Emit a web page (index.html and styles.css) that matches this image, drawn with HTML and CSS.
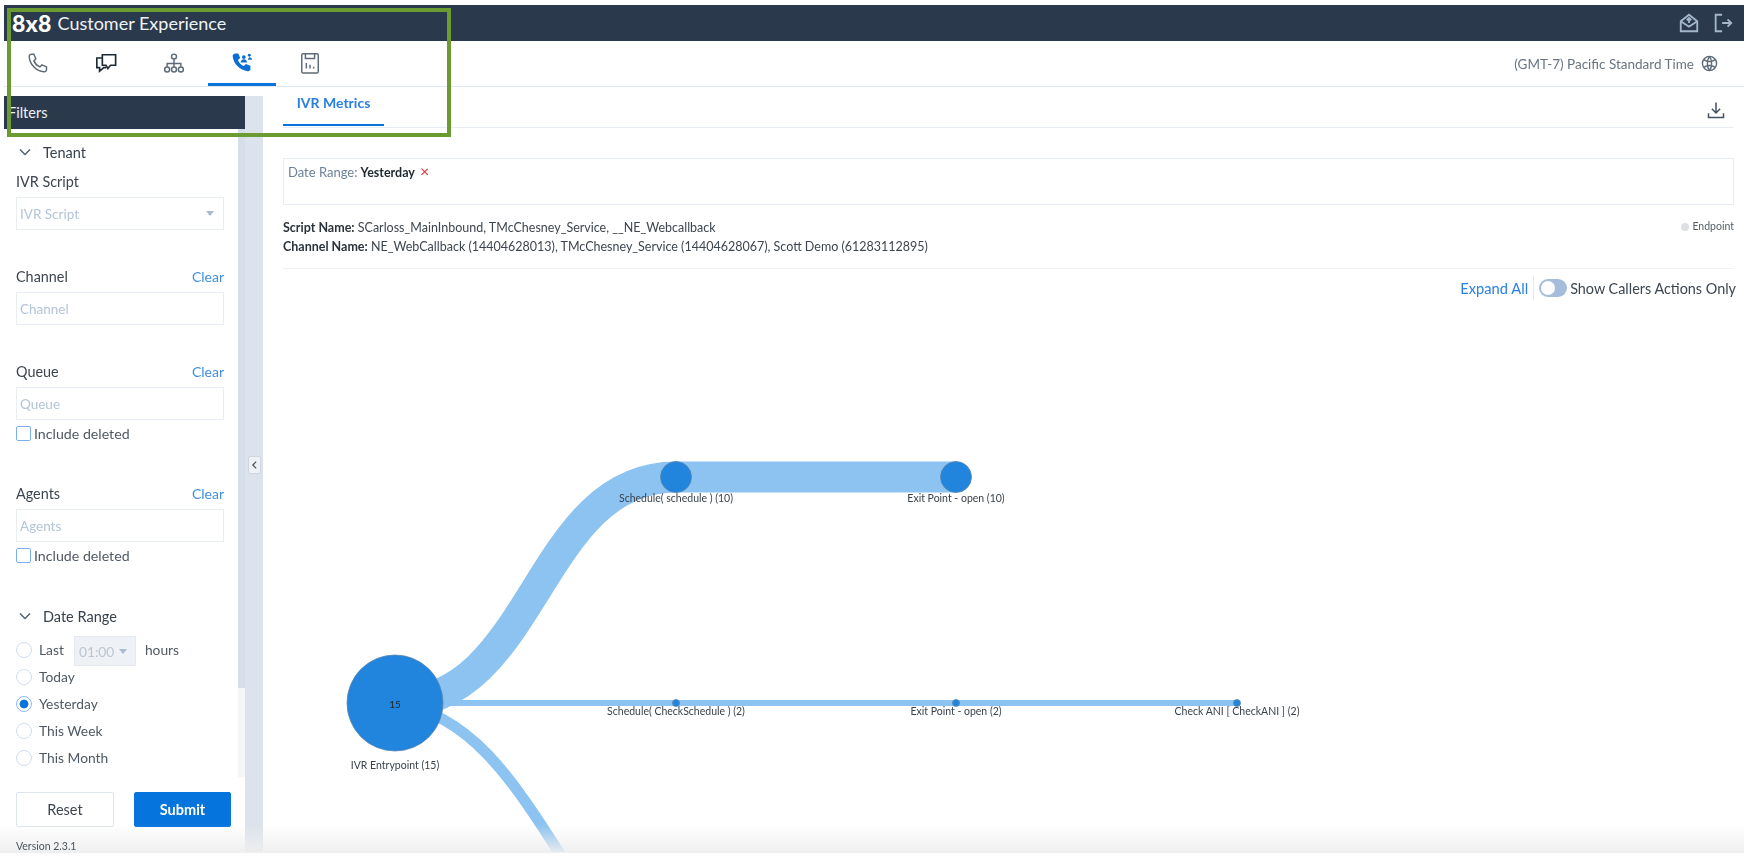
FILE: index.html
```html
<!DOCTYPE html>
<html lang="en">
<head>
<meta charset="utf-8">
<title>8x8 Customer Experience - IVR Metrics</title>
<link rel="stylesheet" href="styles.css">
</head>
<body>
<div class="page">
  <header class="topbar">
    <div class="brand"><span class="logo">8x8</span><span class="product">Customer Experience</span></div>
    <div class="top-actions">
      <svg class="top-icon" viewBox="0 0 24 24"><path d="M3 10 12 3l9 7v11H3z M3 10l9 6 9-6 M12 12V7 M9.500 9 12 6.500 14.500 9"/></svg>
      <svg class="top-icon" viewBox="0 0 24 24"><path d="M11 3H4v18h7 M11 12h10 M17 8l4 4-4 4"/></svg>
    </div>
  </header>
  <nav class="navrow">
    <div class="navtabs">
      <div class="navtab"><svg class="nav-icon" viewBox="0 0 24 24"><path class="ol-grey" d="M5 2.500h2.500l2.200 5-2.200 2.200c1.200 3 3.600 5.400 6.600 6.600l2.200-2.200 5 2.200V19c0 1.600-1.200 2.800-2.800 2.600C10 20.800 3.300 14 2.400 5.300 2.200 3.700 3.400 2.500 5 2.500z"/></svg></div>
      <div class="navtab"><svg class="nav-icon" viewBox="0 0 24 24"><path class="ol-dark" d="M8 3h14.500v11.500H17l-3 3.500-2-3.500H8z M8 6.500H2V17h3v4l4.500-4H12"/></svg></div>
      <div class="navtab"><svg class="nav-icon" viewBox="0 0 24 24"><g class="ol-grey"><circle cx="12" cy="5" r="2.700"/><circle cx="4.500" cy="19" r="2.700"/><circle cx="12" cy="19" r="2.700"/><circle cx="19.500" cy="19" r="2.700"/><path d="M12 8v8 M4.500 16v-3.500h15V16"/></g></svg></div>
      <div class="navtab active"><svg class="nav-icon" viewBox="0 0 24 24"><path class="fill-blue" d="M5 1.500h3l2 5-2.400 2.200c1.100 3 3.400 5.400 6.400 6.600l2.200-2.300 5 2v3.500c0 1.500-1.200 2.600-2.800 2.400C9.500 19.700 2.500 12.800 1.800 4.300 1.700 2.700 3.400 1.500 5 1.500z"/><circle class="fill-blue" cx="14" cy="5.500" r="2"/><path class="fill-blue" d="M10.500 11.500c0-2 1.500-3.500 3.500-3.500s3.500 1.500 3.500 3.500z"/><circle class="fill-blue" cx="20" cy="3.500" r="1.600"/><path class="fill-blue" d="M18.500 8.500c.2-1.800 1-2.800 2-2.800s2.300 1 2.500 2.800z"/></svg></div>
      <div class="navtab"><svg class="nav-icon" viewBox="0 0 24 24"><g class="ol-grey"><rect x="3" y="2" width="18" height="21" rx="1.500"/><path d="M7 2v5h10V2"/><path class="bars" d="M8 18v-6 M12 18v-4 M16 18v-2"/></g></svg></div>
    </div>
    <div class="timezone"><span>(GMT-7) Pacific Standard Time</span>
      <svg class="globe" viewBox="0 0 24 24"><circle cx="12" cy="12" r="10"/><path d="M4 6.500c4 3.500 12 3.500 16 0 M4 17.500c4-3.500 12-3.500 16 0 M12 2c-4 5-4 15 0 20 M12 2c4 5 4 15 0 20"/></svg>
    </div>
  </nav>

  <div class="workspace">
    <aside class="sidebar">
      <div class="filters-head">Filters</div>
      <div class="filters-scroll">
        <div class="filters-body">
          <div class="section-head tenant-head"><svg class="chev" viewBox="0 0 12 8"><path d="M1 1.500 6 6.500l5-5"/></svg>Tenant</div>
          <div class="label-row"><span>IVR Script</span></div>
          <div class="control"><span class="ph">IVR Script</span><span class="caret"></span></div>

          <div class="label-row spaced"><span>Channel</span><a class="clear">Clear</a></div>
          <div class="control"><span class="ph">Channel</span></div>

          <div class="label-row spaced"><span>Queue</span><a class="clear">Clear</a></div>
          <div class="control"><span class="ph">Queue</span></div>
          <div class="check-row"><span class="checkbox"></span>Include deleted</div>

          <div class="label-row spaced"><span>Agents</span><a class="clear">Clear</a></div>
          <div class="control"><span class="ph">Agents</span></div>
          <div class="check-row"><span class="checkbox"></span>Include deleted</div>

          <div class="section-head date-head"><svg class="chev" viewBox="0 0 12 8"><path d="M1 1.500 6 6.500l5-5"/></svg>Date Range</div>
          <div class="radio-list">
            <div class="radio-row"><span class="radio"></span><span>Last</span><span class="hours-select"><span class="hours-value">01:00</span><span class="caret"></span></span><span>hours</span></div>
            <div class="radio-row"><span class="radio"></span><span>Today</span></div>
            <div class="radio-row"><span class="radio checked"></span><span>Yesterday</span></div>
            <div class="radio-row"><span class="radio"></span><span>This Week</span></div>
            <div class="radio-row"><span class="radio"></span><span>This Month</span></div>
          </div>
        </div>
        <div class="scrollbar"><div class="thumb"></div></div>
      </div>
      <div class="filters-foot">
        <div class="buttons"><button class="btn btn-reset">Reset</button><button class="btn btn-submit">Submit</button></div>
        <div class="version">Version 2.3.1</div>
      </div>
    </aside>

    <div class="collapse-strip"><span class="collapse-btn"><svg viewBox="0 0 8 12"><path d="M6 2 2 6l4 4"/></svg></span></div>

    <main class="main">
      <div class="tabs-row">
        <div class="tab">IVR Metrics</div>
        <svg class="download" viewBox="0 0 24 24"><path d="M12 3v12 M7 10.500l5 5 5-5 M3 16v5h18v-5"/></svg>
      </div>
      <div class="range-box"><span class="range-key">Date Range:</span><span class="range-val">Yesterday</span><span class="range-x">×</span></div>
      <div class="info">
        <div class="info-text">
          <div><b>Script Name:</b> SCarloss_MainInbound, TMcChesney_Service, __NE_Webcallback</div>
          <div><b>Channel Name:</b> NE_WebCallback (14404628013), TMcChesney_Service (14404628067), Scott Demo (61283112895)</div>
        </div>
        <div class="legend"><span class="legend-dot"></span>Endpoint</div>
      </div>
      <div class="tools">
        <a class="expand">Expand All</a>
        <span class="tools-sep"></span>
        <span class="switch"><span class="knob"></span></span>
        <span class="switch-label">Show Callers Actions Only</span>
      </div>
      <div class="chart">
        <svg class="sankey" viewBox="283 307 1451 545" preserveAspectRatio="xMinYMin slice">
          <path class="link" stroke-width="31" d="M395 703C536 703 536 477 676 477H956"/>
          <path class="link" stroke-width="6" d="M395 703H1237"/>
          <path class="link" stroke-width="11" d="M395 703C470 715 510 775 565 862"/>
          <circle class="node" cx="395" cy="703" r="48"/>
          <circle class="node" cx="676" cy="477" r="15.500"/>
          <circle class="node" cx="956" cy="477" r="15.500"/>
          <circle class="node" cx="676" cy="703" r="3.500"/>
          <circle class="node" cx="956" cy="703" r="3.500"/>
          <circle class="node" cx="1237" cy="703" r="3.500"/>
          <text class="node-num" x="395" y="708">15</text>
          <text class="node-label" x="395" y="769">IVR Entrypoint (15)</text>
          <text class="node-label" x="676" y="502">Schedule( schedule ) (10)</text>
          <text class="node-label" x="956" y="502">Exit Point - open (10)</text>
          <text class="node-label" x="676" y="715">Schedule( CheckSchedule ) (2)</text>
          <text class="node-label" x="956" y="715">Exit Point - open (2)</text>
          <text class="node-label" x="1237" y="715">Check ANI [ CheckANI ] (2)</text>
        </svg>
      </div>
    </main>
  </div>
  <div class="fade"></div>
  <div class="highlight"></div>
</div>
</body>
</html>
```
FILE: styles.css
```css
* { box-sizing: border-box; }
html, body { margin: 0; height: 860px; overflow: hidden; background: #fff; }
body { font-family: "Lato", "Noto Sans", sans-serif; color: #3d4650; }
.page { position: relative; width: 1744px; height: 853px; padding: 5px 0 0 4px; display: flex; flex-direction: column; overflow: hidden; filter: blur(0.45px); }

.topbar { height: 36px; flex: none; background: #2a3a4c; display: flex; align-items: center; justify-content: space-between; padding: 0 10px 0 8px; color: #fff; }
.brand { display: flex; align-items: center; gap: 6px; }
.logo { font-size: 23px; font-weight: 900; letter-spacing: .2px; }
.product { font-size: 18px; color: #f0f3f6; }
.top-actions { display: flex; align-items: center; gap: 12px; }
.top-icon { width: 22px; height: 22px; fill: none; stroke: #a3b6cb; stroke-width: 2; }

.navrow { height: 46px; flex: none; display: flex; justify-content: space-between; align-items: center; border-bottom: 1px solid #e2e8f0; padding-right: 26px; }
.navtabs { display: flex; height: 100%; }
.navtab { width: 68px; height: 100%; display: flex; align-items: center; justify-content: center; padding-top: 2px; border-bottom: 3px solid transparent; margin-bottom: -1px; }
.navtab.active { border-bottom-color: #0a74da; }
.nav-icon { width: 22px; height: 22px; }
.ol-grey { fill: none; stroke: #5d6b78; stroke-width: 1.600; }
.ol-dark { fill: none; stroke: #1e2a36; stroke-width: 1.800; }
.fill-blue { fill: #0a6fd4; }
.timezone { display: flex; align-items: center; gap: 7px; font-size: 13.500px; color: #6a7480; }
.globe { width: 17px; height: 17px; fill: none; stroke: #5d6b78; stroke-width: 2; }

.workspace { flex: 1; min-height: 0; display: flex; margin-top: 9px; margin-left: -4px; padding-left: 4px; }
.sidebar { width: 241px; flex: none; display: flex; flex-direction: column; }
.filters-head { height: 33px; flex: none; background: #2a3a4c; color: #eef2f6; font-size: 14.500px; line-height: 33px; padding-left: 4px; }
.filters-scroll { height: 648px; flex: none; display: flex; }
.filters-body { width: 234px; flex: none; display: flex; flex-direction: column; padding: 0 14px 0 12px; font-size: 14.400px; }
.scrollbar { width: 7px; flex: none; background: #f4f6f9; }
.thumb { height: 559px; background: #d6deea; }

.section-head { display: flex; align-items: center; height: 20px; flex: none; font-size: 14.500px; color: #37414c; gap: 12px; }
.tenant-head { height: 42px; padding: 4px 0 0 3px; }
.date-head { margin-top: 37px; padding-left: 3px; }
.chev { width: 12px; height: 8px; fill: none; stroke: #55626f; stroke-width: 1.500; }
.label-row { display: flex; justify-content: space-between; align-items: center; height: 20px; flex: none; margin-bottom: 6px; color: #3d4650; }
.label-row.spaced { margin-top: 36px; }
.clear { color: #3f8fe6; font-size: 14px; }
.control { height: 33px; flex: none; border: 1px solid #e9eef5; display: flex; align-items: center; justify-content: space-between; padding: 0 9px 0 3px; }
.ph { color: #b4c4da; font-size: 13.500px; }
.caret { width: 0; height: 0; border-left: 4px solid transparent; border-right: 4px solid transparent; border-top: 5px solid #a9bbd3; }
.check-row { display: flex; align-items: center; gap: 3px; height: 15px; flex: none; margin: 6px 0; color: #4f5963; font-size: 14.200px; }
.checkbox { width: 15px; height: 15px; border: 1.500px solid #7db0ea; border-radius: 2px; }

.radio-list { margin-top: 10px; }
.radio-row { display: flex; align-items: center; height: 27px; color: #4f5963; font-size: 13.800px; }
.radio { width: 16px; height: 16px; border: 1px solid #cfdcec; border-radius: 50%; margin-right: 7px; flex: none; }
.radio.checked { border-color: #8db8ec; background: radial-gradient(circle, #0a74da 0 4px, #fff 4.800px); }
.hours-select { width: 62px; height: 30px; margin: 3px 9px 0 10px; background: #eef1f5; border: 1px solid #e5e9ef; display: flex; align-items: center; justify-content: space-between; padding: 0 8px 0 4px; }
.hours-value { color: #bcc6d2; }

.filters-foot { flex: 1; padding: 15px 14px 0 12px; }
.buttons { display: flex; justify-content: space-between; }
.btn { height: 35px; font: inherit; font-size: 14.500px; border-radius: 2px; cursor: pointer; }
.btn-reset { width: 98px; background: #fff; border: 1px solid #dfe5ec; color: #3d4650; }
.btn-submit { width: 97px; background: #0574dc; border: 1px solid #0574dc; color: #fff; font-weight: 700; }
.version { position: relative; z-index: 1; margin-top: 13px; font-size: 10.500px; color: #4c5660; }

.collapse-strip { width: 18px; flex: none; background: #dde3ec; display: flex; align-items: center; justify-content: center; padding-bottom: 20px; }
.collapse-btn { width: 13px; height: 18px; background: #eef1f5; border: 1px solid #cfd6df; border-radius: 2px; display: flex; align-items: center; justify-content: center; }
.collapse-btn svg { width: 7px; height: 10px; fill: none; stroke: #4c5763; stroke-width: 1.500; }

.main { flex: 1; min-width: 0; padding: 0 10px 0 20px; display: flex; flex-direction: column; }
.tabs-row { height: 32px; flex: none; display: flex; justify-content: space-between; align-items: flex-start; border-bottom: 1px solid #e8edf3; }
.tab { width: 101px; height: 32px; margin-top: -2px; border-bottom: 2.500px solid #0a74da; text-align: center; font-size: 14px; font-weight: 700; color: #2a80e2; line-height: 18px; }
.download { width: 20px; height: 20px; margin: 4px 8px 0 0; fill: none; stroke: #44525f; stroke-width: 1.800; }
.range-box { height: 47px; flex: none; margin-top: 30px; border: 1px solid #e9eef5; padding: 3px 4px; line-height: 18px; }
.range-key { color: #6d8198; font-size: 13px; }
.range-val { color: #1f2830; font-weight: 700; font-size: 12.500px; margin-left: 3px; }
.range-x { color: #e5343d; font-size: 16px; line-height: 14px; margin-left: 5px; }
.info { display: flex; justify-content: space-between; margin-top: 14px; height: 50px; flex: none; border-bottom: 1px solid #edf0f4; font-size: 12.500px; line-height: 18.500px; color: #3d4650; }
.info b { color: #2a333c; }
.legend { display: flex; align-items: center; gap: 3px; height: 15px; font-size: 10.500px; color: #56606a; }
.legend-dot { width: 8px; height: 8px; border-radius: 50%; background: #dcdfe3; }
.tools { height: 38px; flex: none; display: flex; align-items: center; justify-content: flex-end; font-size: 14.400px; margin-right: -2px; }
.expand { color: #2a80e2; font-size: 14.700px; }
.tools-sep { width: 1px; height: 24px; background: #e6eaef; margin: 0 5px; }
.switch { width: 28px; height: 18px; border-radius: 9px; background: #a5bcdc; padding: 2px; margin-right: 3px; }
.knob { display: block; width: 14px; height: 14px; border-radius: 50%; background: #fff; }
.switch-label { color: #3d4650; }

.chart { flex: 1; min-height: 0; }
.sankey { display: block; width: 1451px; height: 545px; }
.link { fill: none; stroke: #8cc3f0; }
.node { fill: #2185de; stroke: #5b86ad; stroke-width: .8; }
.node-num { font-size: 10px; text-anchor: middle; fill: #1d2730; }
.node-label { font-size: 10.500px; text-anchor: middle; fill: #3a434c; }

.fade { position: absolute; left: 0; right: 0; bottom: 0; height: 28px; background: linear-gradient(to bottom, rgba(240,240,240,0), rgba(238,238,238,.95)); pointer-events: none; }
.highlight { position: absolute; left: 7px; top: 8px; width: 444px; height: 129px; border: 4px solid #6a9c31; pointer-events: none; }
```
